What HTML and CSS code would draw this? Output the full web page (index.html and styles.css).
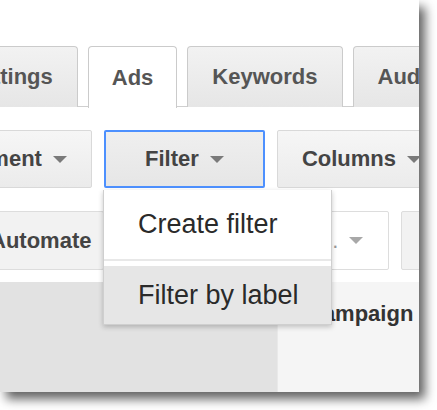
FILE: index.html
```html
<!DOCTYPE html>
<html>
<head>
<meta charset="utf-8">
<link rel="stylesheet" href="styles.css">
</head>
<body>
<div class="panel">
  <div class="tabs">
    <div class="tab tab-settings">Settings</div>
    <div class="tab tab-active">Ads</div>
    <div class="tab">Keywords</div>
    <div class="tab">Audiences</div>
  </div>
  <div class="toolbar">
    <div class="btn btn-segment">Segment <span class="caret"></span></div>
    <div class="btn btn-filter">Filter <span class="caret"></span></div>
    <div class="btn">Columns <span class="caret"></span></div>
  </div>
  <div class="toolbar toolbar-second">
    <div class="btn btn-plain btn-automate">Automate</div>
    <div class="btn btn-white btn-labels"><span class="btn-text">Labels.</span> <span class="caret caret-light"></span></div>
    <div class="btn btn-plain btn-more">More</div>
  </div>
  <div class="table-head">
    <div class="head-cell head-check"></div>
    <div class="head-cell head-campaign">Campaign</div>
  </div>
  <div class="menu">
    <div class="menu-item">Create filter</div>
    <div class="menu-sep"></div>
    <div class="menu-item menu-item-hover">Filter by label</div>
  </div>
</div>
</body>
</html>
```

FILE: styles.css
```css
* { box-sizing: border-box; }
html, body {
  margin: 0;
  padding: 0;
  background: #ffffff;
}
body {
  width: 437px;
  height: 410px;
  overflow: hidden;
  font-family: "Liberation Sans", Arial, sans-serif;
}
.panel {
  position: relative;
  width: 419px;
  height: 392px;
  background: #ffffff;
  overflow: hidden;
  box-shadow: 6px 7px 10px rgba(0, 0, 0, 0.62);
}
.tabs {
  display: flex;
  gap: 10px;
  margin-top: 46px;
  margin-left: -59px;
  height: 61px;
  border-bottom: 1px solid #cfcfcf;
  width: 600px;
}
.tab {
  flex: none;
  height: 61px;
  padding: 0 24px;
  display: flex;
  align-items: center;
  font-size: 22px;
  font-weight: bold;
  color: #555555;
  background: linear-gradient(#f2f2f2, #e6e6e6);
  border: 1px solid #cbcbcb;
  border-bottom: none;
  border-radius: 4px 4px 0 0;
}
.tab-active {
  background: #ffffff;
  height: 62px;
  margin-bottom: -1px;
  padding: 0 23px;
}
.toolbar {
  display: flex;
  gap: 12px;
  margin-top: 23px;
  margin-left: -76px;
  height: 58px;
  width: 700px;
}
.btn {
  flex: none;
  height: 58px;
  padding: 0 24px;
  display: flex;
  align-items: center;
  gap: 11px;
  font-size: 22px;
  font-weight: bold;
  color: #444444;
  background: linear-gradient(#f6f6f6, #ebebeb);
  border: 1px solid #d9d9d9;
  border-radius: 2px;
}
.btn-filter {
  width: 161px;
  justify-content: center;
  border: 2px solid #4d90fe;
  background: linear-gradient(#efefef, #e6e6e6);
}
.caret {
  width: 0;
  height: 0;
  border-left: 7px solid transparent;
  border-right: 7px solid transparent;
  border-top: 7px solid #7a7a7a;
}
.caret-light { border-top-color: #a8a8a8; }
.toolbar-second {
  margin-top: 23px;
  margin-left: -23px;
  height: 59px;
}
.toolbar-second .btn { height: 59px; }
.btn-plain {
  padding: 0 12px;
  background: #f2f2f2;
  border-color: #dddddd;
}
.btn-white {
  background: #ffffff;
  border-color: #dddddd;
  width: 273px;
  justify-content: flex-end;
  padding-right: 25px;
}
.btn-text {
  font-weight: normal;
  color: #999999;
}
.btn-more {
  width: 120px;
  color: #f2f2f2;
}
.table-head {
  display: grid;
  grid-template-columns: 278px 1fr;
  margin-top: 12px;
  height: 110px;
}
.head-check {
  background: #e2e2e2;
  border-right: 1px solid #e9e9e9;
}
.head-campaign {
  background: #f5f5f5;
  padding: 19px 0 0 29px;
  font-size: 22px;
  font-weight: bold;
  color: #333333;
  white-space: nowrap;
}
.menu {
  position: absolute;
  left: 103px;
  top: 190px;
  width: 229px;
  height: 135px;
  background: #ffffff;
  border: 1px solid #cfcfcf;
  border-top: none;
  box-shadow: 0 2px 5px rgba(0, 0, 0, 0.22);
  display: flex;
  flex-direction: column;
}
.menu-item {
  height: 69px;
  padding-left: 34px;
  display: flex;
  align-items: center;
  font-size: 27px;
  color: #2a2a2a;
  white-space: nowrap;
}
.menu-sep {
  height: 2px;
  background: #e8e8e8;
  margin-bottom: 5px;
}
.menu-item-hover {
  height: 58px;
  background: #e6e6e6;
}
```
